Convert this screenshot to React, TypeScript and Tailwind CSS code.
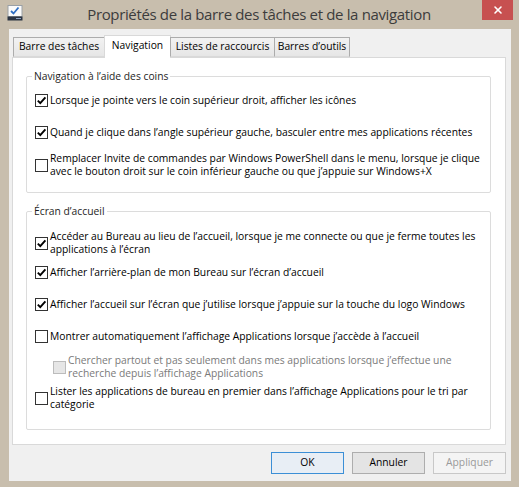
import { X } from "lucide-react";

type Row = {
  lines: string[];
  checked?: boolean;
  disabled?: boolean;
  indent?: boolean;
  mt: string;
};

const navRows: Row[] = [
  {
    lines: ["Lorsque je pointe vers le coin supérieur droit, afficher les icônes"],
    checked: true,
    mt: "mt-[3px]",
  },
  {
    lines: ["Quand je clique dans l’angle supérieur gauche, basculer entre mes applications récentes"],
    checked: true,
    mt: "mt-[4px]",
  },
  {
    lines: [
      "Remplacer Invite de commandes par Windows PowerShell dans le menu, lorsque je clique",
      "avec le bouton droit sur le coin inférieur gauche ou que j’appuie sur Windows+X",
    ],
    mt: "mt-[5px]",
  },
];

const startRows: Row[] = [
  {
    lines: [
      "Accéder au Bureau au lieu de l’accueil, lorsque je me connecte ou que je ferme toutes les",
      "applications à l’écran",
    ],
    checked: true,
    mt: "mt-[11px]",
  },
  { lines: ["Afficher l’arrière-plan de mon Bureau sur l’écran d’accueil"], checked: true, mt: "mt-[1px]" },
  {
    lines: ["Afficher l’accueil sur l’écran que j’utilise lorsque j’appuie sur la touche du logo Windows"],
    checked: true,
    mt: "mt-[4px]",
  },
  { lines: ["Montrer automatiquement l’affichage Applications lorsque j’accède à l’accueil"], mt: "mt-[4px]" },
  {
    lines: [
      "Chercher partout et pas seulement dans mes applications lorsque j’effectue une",
      "recherche depuis l’affichage Applications",
    ],
    disabled: true,
    indent: true,
    mt: "mt-[3px]",
  },
  {
    lines: [
      "Lister les applications de bureau en premier dans l’affichage Applications pour le tri par",
      "catégorie",
    ],
    mt: "mt-[3px]",
  },
];

const CheckBox = ({ checked, disabled }: { checked?: boolean; disabled?: boolean }) => (
  <span
    className={
      disabled
        ? "flex-none w-[13px] h-[13px] border border-[#bcbcbc] bg-[#e6e6e6]"
        : "flex-none w-[13px] h-[13px] border border-[#333333] bg-white flex items-center justify-center"
    }
  >
    {checked && (
      <svg width="11" height="11" viewBox="0 0 11 11">
        <path d="M1.8 5.6 L4.3 8.2 L9.4 2.4" fill="none" stroke="#000" strokeWidth="1.9" />
      </svg>
    )}
  </span>
);

const OptionRow = ({ row }: { row: Row }) => (
  <div className={`flex items-center h-[28px] ${row.mt} ${row.indent ? "pl-[18px]" : ""}`}>
    <CheckBox checked={row.checked} disabled={row.disabled} />
    <span className={`ml-[2px] leading-[13px] ${row.disabled ? "text-[#7a7a7a]" : "text-black"}`}>
      {row.lines.map((l, i) => (
        <span key={i} className="block whitespace-nowrap">
          {l}
        </span>
      ))}
    </span>
  </div>
);

const Group = ({ title, rows, extra }: { title: string; rows: Row[]; extra: string }) => (
  <fieldset className={`w-[465px] ml-[13px] border border-[#dcdcdc] rounded-[2px] px-[8px] ${extra}`}>
    <legend className="ml-[-3px] px-[2px] leading-[14px] text-[#1e1e1e]">{title}</legend>
    {rows.map((r, i) => (
      <OptionRow key={i} row={r} />
    ))}
  </fieldset>
);

const tabs = [
  { label: "Barre des tâches", w: "w-[92px]" },
  { label: "Navigation", w: "w-[67px]", active: true },
  { label: "Listes de raccourcis", w: "w-[105px]" },
  { label: "Barres d’outils", w: "w-[76px]" },
];

const Button = ({ label, kind }: { label: string; kind?: "default" | "disabled" }) => (
  <button
    className={
      kind === "default"
        ? "w-[73px] h-[22px] border border-[#3c8fd6] bg-[#e8eef5] text-black"
        : kind === "disabled"
        ? "w-[73px] h-[22px] border border-[#c8c8c8] bg-[#f4f4f4] text-[#9a9a9a]"
        : "w-[73px] h-[22px] border border-[#adadad] bg-[#e4e4e4] text-black"
    }
  >
    {label}
  </button>
);

export default function App() {
  return (
    <div
      className="w-[519px] h-[487px] bg-[#c8bead] flex flex-col text-[10.3px]"
      style={{ fontFamily: '"Open Sans", "Noto Sans", sans-serif' }}
    >
      {/* title bar */}
      <div className="h-[29px] flex-none flex items-start relative">
        <div className="w-[16px] h-[16px] ml-[7px] mt-[5px]">
          <svg width="16" height="16" viewBox="0 0 16 16">
            <rect x="1" y="0.5" width="14" height="11" fill="#fbfbfb" stroke="#9aa0a6" />
            <path d="M4 6 L6.5 8.5 L11.5 2.5" fill="none" stroke="#2f6fc4" strokeWidth="1.8" />
            <rect x="0.5" y="11.5" width="15" height="4" fill="#2b3443" />
            <rect x="9" y="13" width="5" height="1" fill="#8fa2c0" />
          </svg>
        </div>
        <div className="flex-1 text-center text-[15px] text-[#3c3c3c] mt-[3px] tracking-[-0.35px] pr-[24px]">
          Propriétés de la barre des tâches et de la navigation
        </div>
        <div className="absolute right-[6px] top-0 w-[31px] h-[20px] bg-[#c75050] flex items-center justify-center">
          <X size={12} strokeWidth={3.2} color="#ffffff" />
        </div>
      </div>

      {/* client area */}
      <div className="ml-[9px] mr-[8px] mb-[6px] flex-1 bg-[#f0f0f0] flex flex-col pl-[3px] pr-[5px] pt-[6px]">
        <div className="flex items-end h-[22px] pl-[1px] relative z-10">
          {tabs.map((t) =>
            t.active ? (
              <div
                key={t.label}
                className={`${t.w} h-[23px] -ml-px -mb-px bg-white border border-[#d9d9d9] border-b-0 flex items-center justify-center text-black pb-[2px]`}
              >
                {t.label}
              </div>
            ) : (
              <div
                key={t.label}
                className={`${t.w} h-[20px] -ml-px first:ml-0 bg-gradient-to-b from-[#f2f2f2] to-[#e6e6e6] border border-[#acacac] border-b-[#d9d9d9] flex items-center justify-center text-black`}
              >
                {t.label}
              </div>
            )
          )}
        </div>
        <div className="h-[388px] bg-white border border-[#d9d9d9] pt-[11px] flex flex-col">
          <Group title="Navigation à l’aide des coins" rows={navRows} extra="pb-[13px]" />
          <Group title="Écran d’accueil" rows={startRows} extra="mt-[11px] pb-[17px]" />
        </div>
        <div className="flex justify-end gap-[8px] mt-[7px] pr-[0px]">
          <Button label="OK" kind="default" />
          <Button label="Annuler" />
          <Button label="Appliquer" kind="disabled" />
        </div>
      </div>
    </div>
  );
}
